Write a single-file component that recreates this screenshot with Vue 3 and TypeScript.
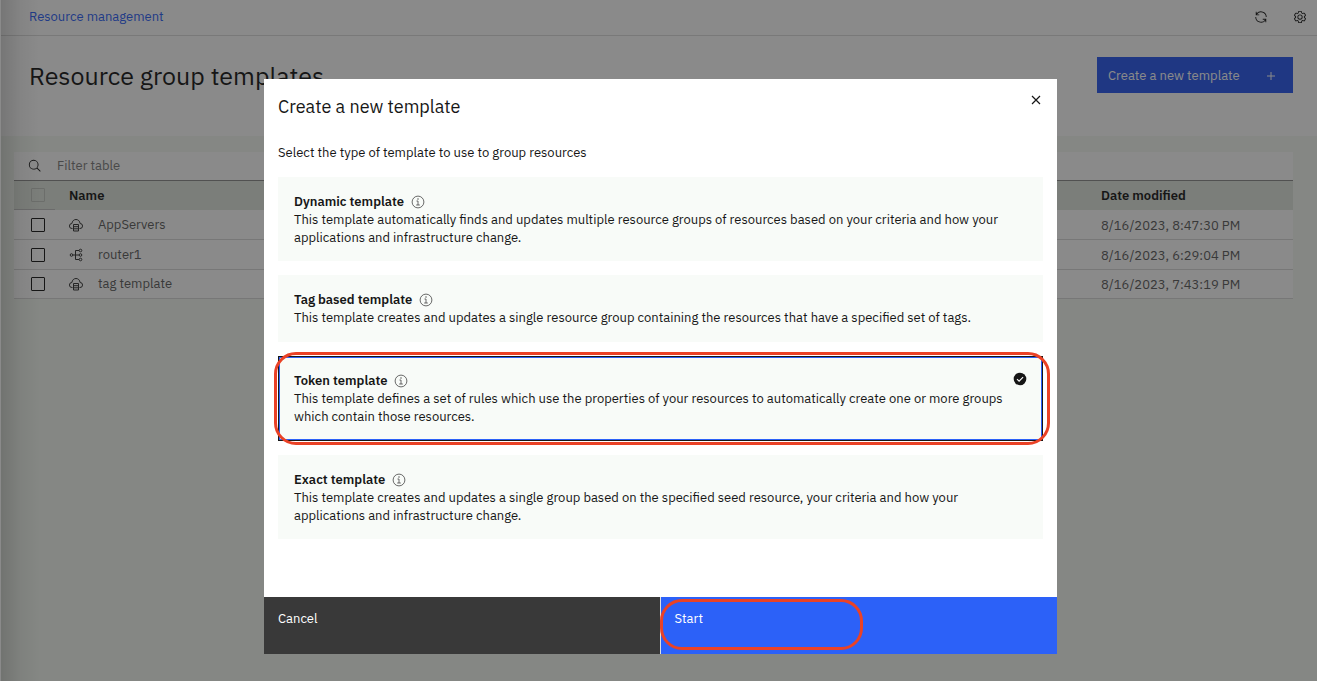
<script setup lang="ts">
import { ref } from 'vue'

interface Template {
  id: string
  title: string
  description: string
}

interface Row {
  name: string
  icon: 'cloud' | 'network'
  modified: string
}

const templates: Template[] = [
  {
    id: 'dynamic',
    title: 'Dynamic template',
    description:
      'This template automatically finds and updates multiple resource groups of resources based on your criteria and how your applications and infrastructure change.',
  },
  {
    id: 'tag',
    title: 'Tag based template',
    description:
      'This template creates and updates a single resource group containing the resources that have a specified set of tags.',
  },
  {
    id: 'token',
    title: 'Token template',
    description:
      'This template defines a set of rules which use the properties of your resources to automatically create one or more groups which contain those resources.',
  },
  {
    id: 'exact',
    title: 'Exact template',
    description:
      'This template creates and updates a single group based on the specified seed resource, your criteria and how your applications and infrastructure change.',
  },
]

const rows: Row[] = [
  { name: 'AppServers', icon: 'cloud', modified: '8/16/2023, 8:47:30 PM' },
  { name: 'router1', icon: 'network', modified: '8/16/2023, 6:29:04 PM' },
  { name: 'tag template', icon: 'cloud', modified: '8/16/2023, 7:43:19 PM' },
]

const selected = ref('token')
const filter = ref('')
</script>

<template>
  <div class="page">
    <header class="topbar">
      <a href="#">Resource management</a>
      <div class="tools">
        <button type="button" class="icon-button" aria-label="Refresh">
          <svg width="14" height="14" viewBox="0 0 32 32" fill="currentColor">
            <path d="M12 10H6.78A11 11 0 0 1 27 16h2A13 13 0 0 0 6 7.68V4H4v8h8zM20 22h5.22A11 11 0 0 1 5 16H3a13 13 0 0 0 23 8.32V28h2v-8h-8z" />
          </svg>
        </button>
        <button type="button" class="icon-button" aria-label="Settings">
          <svg width="14" height="14" viewBox="0 0 32 32" fill="currentColor">
            <path d="M27 16.76v-1.53l1.92-1.68A2 2 0 0 0 29.3 11l-2.36-4a2 2 0 0 0-1.73-1 2 2 0 0 0-.64.1l-2.43.82a11.35 11.35 0 0 0-1.31-.75l-.51-2.52a2 2 0 0 0-2-1.61h-4.68a2 2 0 0 0-2 1.61l-.51 2.52a11.48 11.48 0 0 0-1.32.75l-2.38-.86A2 2 0 0 0 6.79 6a2 2 0 0 0-1.73 1L2.7 11a2 2 0 0 0 .41 2.51L5 15.24v1.53l-1.89 1.68A2 2 0 0 0 2.7 21l2.36 4a2 2 0 0 0 1.73 1 2 2 0 0 0 .64-.1l2.43-.82a11.35 11.35 0 0 0 1.31.75l.51 2.52a2 2 0 0 0 2 1.61h4.72a2 2 0 0 0 2-1.61l.51-2.52a11.48 11.48 0 0 0 1.32-.75l2.42.82a2 2 0 0 0 .64.1 2 2 0 0 0 1.73-1l2.28-4a2 2 0 0 0-.41-2.51zM25.21 24l-3.43-1.16a8.86 8.86 0 0 1-2.71 1.57L18.36 28h-4.72l-.71-3.55a9.36 9.36 0 0 1-2.7-1.57L6.79 24l-2.36-4 2.72-2.4a8.9 8.9 0 0 1 0-3.13L4.43 12l2.36-4 3.43 1.16a8.86 8.86 0 0 1 2.71-1.57L13.64 4h4.72l.71 3.55a9.36 9.36 0 0 1 2.7 1.57L25.21 8l2.36 4-2.72 2.4a8.9 8.9 0 0 1 0 3.13L27.57 20z" />
            <path d="M16 22a6 6 0 1 1 6-6 5.94 5.94 0 0 1-6 6zm0-10a3.91 3.91 0 0 0-4 4 3.91 3.91 0 0 0 4 4 3.91 3.91 0 0 0 4-4 3.91 3.91 0 0 0-4-4z" />
          </svg>
        </button>
      </div>
    </header>

    <section class="heading">
      <h1>Resource group templates</h1>
      <button type="button" class="create">
        <span>Create a new template</span>
        <svg width="8" height="8" viewBox="0 0 8 8" fill="none" stroke="currentColor"><path d="M4 0v8M0 4h8" /></svg>
      </button>
    </section>

    <main class="content">
      <div class="search">
        <svg width="14" height="14" viewBox="0 0 32 32" fill="currentColor" aria-hidden="true">
          <path d="M29 27.59l-7.55-7.55a11 11 0 1 0-1.41 1.41L27.59 29zM4 13a9 9 0 1 1 9 9 9 9 0 0 1-9-9z" />
        </svg>
        <input v-model="filter" type="text" placeholder="Filter table" aria-label="Filter table" />
      </div>
      <table>
        <thead>
          <tr>
            <th class="check"><input type="checkbox" disabled aria-label="Select all" /></th>
            <th>Name</th>
            <th class="date">Date modified</th>
          </tr>
        </thead>
        <tbody>
          <tr v-for="row in rows" :key="row.name">
            <td class="check"><input type="checkbox" :aria-label="`Select ${row.name}`" /></td>
            <td>
              <div class="name">
                <svg v-if="row.icon === 'cloud'" width="14" height="14" viewBox="0 0 14 14" fill="none" stroke="currentColor">
                  <path d="M3.5 10.5H3A2.5 2.5 0 0 1 2.9 5.5C3.2 3.1 4.8 1.5 7 1.5S10.8 3.1 11.1 5.5A2.5 2.5 0 0 1 11 10.5h-.5" />
                  <path d="M4.5 6.5h5v6.5h-5zM4.5 8.7h5M4.5 10.8h5" />
                </svg>
                <svg v-else width="14" height="14" viewBox="0 0 14 14" fill="none" stroke="currentColor">
                  <circle cx="2.5" cy="7" r="1.3" />
                  <circle cx="11.5" cy="2.5" r="1.3" />
                  <circle cx="11.5" cy="7" r="1.3" />
                  <circle cx="11.5" cy="11.5" r="1.3" />
                  <path d="M4 7h6M10 2.5H6.5v9H10" />
                </svg>
                <span>{{ row.name }}</span>
              </div>
            </td>
            <td class="date">{{ row.modified }}</td>
          </tr>
        </tbody>
      </table>
    </main>
    <div class="edge"></div>
  </div>

  <div class="overlay">
    <form class="modal" role="dialog" aria-labelledby="dialog-title" @submit.prevent>
      <div class="modal-head">
        <h2 id="dialog-title">Create a new template</h2>
        <button type="button" class="icon-button" aria-label="Close">
          <svg width="10" height="10" viewBox="0 0 10 10" fill="none" stroke="currentColor" stroke-width="1.2"><path d="M1 1l8 8M9 1L1 9" /></svg>
        </button>
      </div>
      <p class="intro">Select the type of template to use to group resources</p>
      <div class="cards">
        <div v-for="t in templates" :key="t.id" class="card" :class="{ selected: selected === t.id }">
          <input :id="t.id" v-model="selected" type="radio" name="template" :value="t.id" />
          <div class="card-title">
            <label :for="t.id">{{ t.title }}</label>
            <button type="button" class="icon-button info" :aria-label="`About ${t.title}`">
              <svg width="14" height="14" viewBox="0 0 14 14" fill="none" stroke="currentColor">
                <circle cx="7" cy="7" r="5.9" stroke-width="0.8" />
                <path d="M5.5 6h1.5v4M5.2 10h3.6" stroke-width="0.8" />
                <circle cx="7" cy="4" r="0.7" fill="currentColor" stroke="none" />
              </svg>
            </button>
          </div>
          <p>{{ t.description }}</p>
          <svg v-if="selected === t.id" class="tick" width="14" height="14" viewBox="0 0 14 14">
            <circle cx="7" cy="7" r="6.3" fill="#161616" />
            <path d="M4 7.1l2.1 2.1 4-4" fill="none" stroke="#fff" stroke-width="1.1" />
          </svg>
          <span v-if="t.id === 'token'" class="marker card-marker"></span>
        </div>
      </div>
      <div class="actions">
        <button type="button" class="cancel">Cancel</button>
        <button type="submit" class="start">Start<span class="marker start-marker"></span></button>
      </div>
    </form>
  </div>
</template>

<style>
body {
  margin: 0;
  background: #f4f9f2;
}
</style>

<style scoped>
* {
  box-sizing: border-box;
}
.page,
.overlay {
  font-family: 'IBM Plex Sans', Roboto, 'Liberation Sans', sans-serif;
  font-size: 13px;
  line-height: 18px;
  color: #161616;
}
.page {
  position: relative;
  min-height: 100vh;
  background: #f4f9f2;
}
button,
input {
  font: inherit;
  color: inherit;
}
h1,
h2,
p {
  margin: 0;
  font-weight: 400;
}
button {
  border: 0;
  border-radius: 0;
  cursor: pointer;
}
.icon-button {
  display: flex;
  padding: 0;
  background: none;
}
.topbar {
  display: flex;
  align-items: center;
  justify-content: space-between;
  height: 36px;
  padding: 0 10px 2px 29px;
  background: #fff;
  border-bottom: 1px solid #dcdcdc;
}
.topbar a {
  color: #2c61f8;
  text-decoration: none;
}
.tools {
  display: flex;
  gap: 25px;
}
.heading {
  display: flex;
  align-items: flex-start;
  justify-content: space-between;
  height: 100px;
  padding: 21px 24px 0 29px;
  background: #fff;
}
h1 {
  font-size: 25px;
  line-height: 38px;
}
.create {
  display: flex;
  align-items: center;
  justify-content: space-between;
  width: 196px;
  height: 36px;
  padding: 1px 18px 0 11px;
  background: #2858f0;
  color: #fff;
}
.content {
  padding: 16px 24px 0 14px;
}
.search {
  display: flex;
  align-items: center;
  gap: 15px;
  height: 29px;
  padding-left: 14px;
  background: #fff;
  border-bottom: 1px solid #8d8d8d;
}
.search input {
  flex: 1;
  padding: 0;
  border: 0;
  background: none;
  outline: 0;
}
.search input::placeholder {
  color: #7c7c7c;
  opacity: 1;
}
table {
  width: 100%;
  border-collapse: separate;
  border-spacing: 0;
  table-layout: fixed;
}
th,
td {
  padding: 0 0 0 14px;
  text-align: left;
}
th {
  height: 29px;
  background: #e0e6de;
  font-weight: 600;
}
td {
  height: 30px;
  background: #fff;
  color: #5c5c5c;
  border-bottom: 1px solid #d8d8d8;
}
tr:last-child td {
  height: 29px;
}
.check {
  width: 41px;
  padding-left: 17px;
}
th.check {
  border-bottom: 1px solid #c0c0c0;
}
.date {
  width: 206px;
}
td.date {
  padding-top: 2px;
}
.check input {
  display: block;
  appearance: none;
  width: 14px;
  height: 14px;
  margin: 0;
  border: 1px solid #161616;
  border-radius: 1px;
}
.check input:disabled {
  border-color: #c2c6c0;
}
.name {
  display: flex;
  align-items: center;
  gap: 15px;
}
.name svg {
  color: #333;
}
.edge {
  position: absolute;
  inset: 0 auto 0 0;
  width: 40px;
  border-left: 1px solid #fff;
  background: linear-gradient(to right, rgba(0, 0, 0, 0.16), rgba(0, 0, 0, 0.05) 50%, transparent);
}
.overlay {
  position: fixed;
  inset: 0;
  display: flex;
  align-items: center;
  justify-content: center;
  padding: 52px 0 0 4px;
  background: rgba(22, 22, 22, 0.5);
}
.modal {
  width: 793px;
  max-width: 100%;
  background: #fff;
}
.modal-head {
  display: flex;
  align-items: flex-start;
  justify-content: space-between;
  padding: 16px 16px 0 14px;
}
h2 {
  font-size: 18px;
  line-height: 24px;
}
.intro {
  padding: 25px 14px 15px;
}
.cards {
  display: grid;
  gap: 14px;
  padding: 0 14px 58px;
}
.card {
  position: relative;
  min-height: 67px;
  padding: 16px 40px 14px 16px;
  background: #f8fbf8;
}
.card > input {
  position: absolute;
  opacity: 0;
}
.card.selected {
  padding-bottom: 15px;
  outline: 1px solid #161616;
  outline-offset: -1px;
  box-shadow: inset 0 0 0 2px #2c61f8;
}
.card-title {
  display: flex;
  align-items: center;
  gap: 7px;
}
.card-title label {
  font-weight: 600;
}
.card-title label::after {
  content: '';
  position: absolute;
  inset: 0;
}
.info {
  position: relative;
  color: #444;
}
.tick {
  position: absolute;
  top: 16px;
  right: 16px;
}
.marker {
  position: absolute;
  border: 3px solid #ea4226;
  border-radius: 22px;
  pointer-events: none;
}
.card-marker {
  inset: -4px -7px -4px -4px;
}
.actions {
  display: grid;
  grid-template-columns: 1fr 1fr;
}
.actions button {
  height: 57px;
  padding: 13px 14px;
  text-align: left;
  display: flex;
  align-items: flex-start;
  color: #fff;
}
.actions .cancel {
  background: #393939;
  border-right: 1px solid #e0e0e0;
}
.actions .start {
  position: relative;
  background: #2c61f8;
}
.start-marker {
  top: 2px;
  left: -1px;
  width: 203px;
  height: 51px;
}
</style>
